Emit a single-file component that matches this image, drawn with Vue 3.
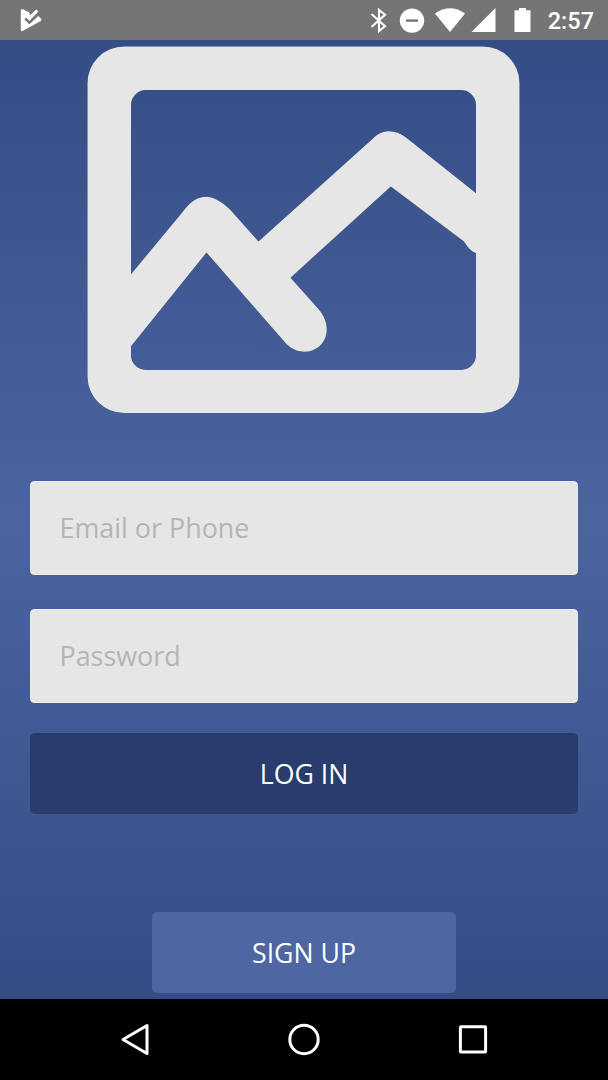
<script setup>
import { ref } from 'vue'

const account = ref('')
const password = ref('')
</script>

<template>
  <div class="screen">
    <header class="status">
      <svg class="status-icons" width="608" height="40" viewBox="0 0 608 40" aria-hidden="true">
        <path d="M20.8 10.6Q20.8 8.4 22.8 9.3L29.3 12.6L30.3 15.2L35.2 10.2Q36.6 9.2 37.6 10.4Q38.4 11.4 37.5 12.5L29.4 21.2L26.2 18L24.6 19.4L29.4 24.2L38.2 15.9L40.8 18.3Q42.4 20 40.8 21.1L22.6 31Q20.8 31.6 20.8 29.8Z" fill="#fff" />
        <path d="M25.3 18.5L29.4 22.6L38 13.9" fill="none" stroke="#757575" stroke-width="2.1" />
        <path d="M371.5 14L385 26.2L379 31V10L385 14.7L371.5 27" fill="none" stroke="#fff" stroke-width="2.1" />
        <circle cx="412" cy="20.6" r="12.2" fill="#fff" />
        <path d="M406 20.6H418" stroke="#757575" stroke-width="2.4" />
        <path d="M435 13.6Q450 2.8 465 13.6L450 32Z" fill="#fff" />
        <path d="M495.5 8V32H471.5Z" fill="#fff" />
        <path d="M519 8H526V10.3H530.5V32H514.5V10.3H519Z" fill="#fff" />
      </svg>
      <time class="clock">2:57</time>
    </header>

    <main class="content">
      <svg class="picture" width="436" height="372" viewBox="86 44 436 372" aria-hidden="true">
        <g class="picture-shape">
          <path
            fill-rule="evenodd"
            d="M124 46.5H483A36.5 36.5 0 0 1 519.5 83V376.5A36.5 36.5 0 0 1 483 413H124A36.5 36.5 0 0 1 87.5 376.5V83A36.5 36.5 0 0 1 124 46.5ZM146 90A15 15 0 0 0 131 105V355A15 15 0 0 0 146 370H461A15 15 0 0 0 476 355V105A15 15 0 0 0 461 90Z"
          />
          <path
            d="M130 275.5L183 211.5C197 193 211 191.5 230 209.5L258.5 241.5L373 138.5C382 129 395 129 406 137.5L477 194V253.5C472 252 468 248 464 241.5L390.8 186.5L290.5 277.7L318 308.5C326 317 327.5 327 326.5 333C324 351 301 359 286 343.5L206.5 252.5L130 347.5Z"
          />
        </g>
      </svg>

      <form class="form" @submit.prevent>
        <input v-model="account" class="field" type="text" placeholder="Email or Phone" />
        <input v-model="password" class="field" type="password" placeholder="Password" />
        <button class="button login" type="submit">LOG IN</button>
        <button class="button signup" type="button">SIGN UP</button>
      </form>
    </main>

    <nav class="navbar">
      <svg width="608" height="81" viewBox="0 999 608 81" fill="none" stroke="#fff" stroke-width="3" aria-hidden="true">
        <path d="M147 1025.5V1053.5L123 1039.5Z" stroke-linejoin="round" />
        <circle cx="304" cy="1039.5" r="14.2" />
        <rect x="460.4" y="1026.8" width="25.2" height="25.2" rx="0.6" />
      </svg>
    </nav>
  </div>
</template>

<style>
html,
body {
  margin: 0;
  background: #000;
}
</style>

<style scoped>
.screen {
  display: flex;
  flex-direction: column;
  width: 608px;
  height: 1080px;
  overflow: hidden;
  font-family: "Open Sans", "Noto Sans", sans-serif;
}

.status {
  position: relative;
  flex: none;
  height: 40px;
  background: #757575;
}

.status-icons {
  display: block;
}

.clock {
  position: absolute;
  right: 14px;
  top: 1px;
  color: #fff;
  font: 500 23.5px/41px Roboto, sans-serif;
}

.content {
  display: flex;
  flex: none;
  flex-direction: column;
  align-items: center;
  box-sizing: border-box;
  height: 959px;
  padding-top: 4px;
  background: linear-gradient(#344d85, #4c65a1 50%, #344d85);
}

.picture {
  flex: none;
  display: block;
}

.picture-shape {
  fill: #e6e6e6;
  filter: drop-shadow(0 0 0.7px #142b64);
}

.form {
  display: flex;
  flex-direction: column;
  align-items: center;
  width: 548px;
  margin-top: 65px;
}

.field {
  box-sizing: border-box;
  width: 548px;
  height: 94px;
  margin: 0 0 34px;
  padding: 0 29px 2px 28.5px;
  border: 1px solid #eeeeec;
  border-radius: 4px;
  outline: none;
  background: #e6e6e6;
  box-shadow: 0 0 1px #28458b;
  color: #444;
  font: 400 26.9px/36px "Open Sans", "Noto Sans", sans-serif;
}

.field::placeholder {
  color: #b5b5b5;
  opacity: 1;
}

.button {
  height: 81px;
  padding: 0;
  border: 0;
  border-radius: 5px;
  color: #fff;
  font: 400 26.67px/36px "Open Sans", "Noto Sans", sans-serif;
}

.login {
  width: 548px;
  margin-top: -4px;
  background: #283d6e;
}

.signup {
  width: 304px;
  margin-top: 98px;
  background: #4e66a1;
}

.navbar {
  flex: none;
  height: 81px;
  background: #000;
}

.navbar svg {
  display: block;
}
</style>
